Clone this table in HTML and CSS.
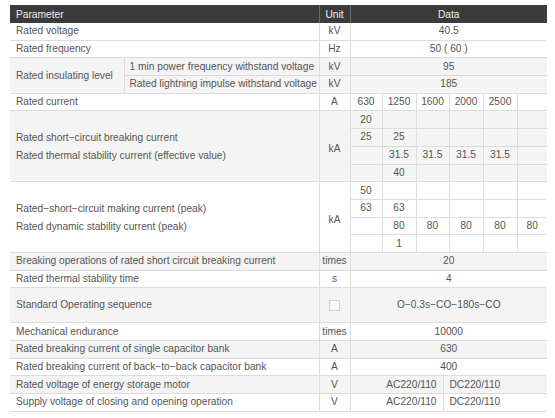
FILE: index.html
```html
<!DOCTYPE html>
<html>
<head>
<meta charset="utf-8">
<link rel="stylesheet" href="styles.css">
</head>
<body>
<table class="spec">
  <colgroup>
    <col class="c-p1"><col class="c-p2"><col class="c-u">
    <col class="c-d1"><col class="c-d2"><col class="c-d3"><col class="c-d4"><col class="c-d5"><col class="c-d6"><col class="c-d7">
  </colgroup>
  <thead>
    <tr class="head">
      <th class="p" colspan="2">Parameter</th>
      <th>Unit</th>
      <th colspan="7">Data</th>
    </tr>
  </thead>
  <tbody>
    <tr>
      <td class="p" colspan="2">Rated voltage</td><td class="u">kV</td><td class="c" colspan="7">40.5</td>
    </tr>
    <tr>
      <td class="p" colspan="2">Rated frequency</td><td class="u">Hz</td><td class="c" colspan="7">50 ( 60 )</td>
    </tr>
    <tr class="g">
      <td class="p" rowspan="2">Rated insulating level</td><td class="s">1 min power frequency withstand voltage</td><td class="u">kV</td><td class="c" colspan="7">95</td>
    </tr>
    <tr class="g">
      <td class="s">Rated lightning impulse withstand voltage</td><td class="u">kV</td><td class="c" colspan="7">185</td>
    </tr>
    <tr>
      <td class="p" colspan="2">Rated current</td><td class="u">A</td>
      <td class="c">630</td><td class="c">1250</td><td class="c" colspan="2">1600</td><td class="c">2000</td><td class="c">2500</td><td class="c"></td>
    </tr>
    <tr class="g">
      <td class="p two" colspan="2" rowspan="4">Rated short−circuit breaking current<br>Rated thermal stability current (effective value)</td>
      <td class="u k" rowspan="4">kA</td>
      <td class="c">20</td><td class="c"></td><td class="c" colspan="2"></td><td class="c"></td><td class="c"></td><td class="c"></td>
    </tr>
    <tr class="g">
      <td class="c">25</td><td class="c">25</td><td class="c" colspan="2"></td><td class="c"></td><td class="c"></td><td class="c"></td>
    </tr>
    <tr class="g">
      <td class="c"></td><td class="c">31.5</td><td class="c" colspan="2">31.5</td><td class="c">31.5</td><td class="c">31.5</td><td class="c"></td>
    </tr>
    <tr class="g">
      <td class="c"></td><td class="c">40</td><td class="c" colspan="2"></td><td class="c"></td><td class="c"></td><td class="c"></td>
    </tr>
    <tr>
      <td class="p two" colspan="2" rowspan="4">Rated−short−circuit making current (peak)<br>Rated dynamic stability current (peak)</td>
      <td class="u k" rowspan="4">kA</td>
      <td class="c">50</td><td class="c"></td><td class="c" colspan="2"></td><td class="c"></td><td class="c"></td><td class="c"></td>
    </tr>
    <tr>
      <td class="c">63</td><td class="c">63</td><td class="c" colspan="2"></td><td class="c"></td><td class="c"></td><td class="c"></td>
    </tr>
    <tr>
      <td class="c"></td><td class="c">80</td><td class="c" colspan="2">80</td><td class="c">80</td><td class="c">80</td><td class="c">80</td>
    </tr>
    <tr>
      <td class="c"></td><td class="c">1</td><td class="c" colspan="2"></td><td class="c"></td><td class="c"></td><td class="c"></td>
    </tr>
    <tr class="g">
      <td class="p" colspan="2">Breaking operations of rated short circuit breaking current</td><td class="u">times</td><td class="c" colspan="7">20</td>
    </tr>
    <tr>
      <td class="p" colspan="2">Rated thermal stability time</td><td class="u">s</td><td class="c" colspan="7">4</td>
    </tr>
    <tr class="g tall">
      <td class="p" colspan="2">Standard Operating sequence</td><td class="u"><span class="box"></span></td><td class="c" colspan="7">O−0.3s−CO−180s−CO</td>
    </tr>
    <tr>
      <td class="p" colspan="2">Mechanical endurance</td><td class="u">times</td><td class="c" colspan="7">10000</td>
    </tr>
    <tr class="g">
      <td class="p" colspan="2">Rated breaking current of single capacitor bank</td><td class="u">A</td><td class="c" colspan="7">630</td>
    </tr>
    <tr>
      <td class="p" colspan="2">Rated breaking current of back−to−back capacitor bank</td><td class="u">A</td><td class="c" colspan="7">400</td>
    </tr>
    <tr class="g">
      <td class="p" colspan="2">Rated voltage of energy storage motor</td><td class="u">V</td><td class="r" colspan="3">AC220/110</td><td class="l" colspan="4">DC220/110</td>
    </tr>
    <tr>
      <td class="p" colspan="2">Supply voltage of closing and opening operation</td><td class="u">V</td><td class="r" colspan="3">AC220/110</td><td class="l" colspan="4">DC220/110</td>
    </tr>
  </tbody>
</table>
</body>
</html>
```

FILE: styles.css
```css
html, body {
  margin: 0;
  padding: 0;
  background: #ffffff;
}

.spec {
  margin: 5px 0 0 10px;
  width: 537px;
  table-layout: fixed;
  border-collapse: collapse;
  font-family: "Liberation Sans", Arial, sans-serif;
  font-size: 10.2px;
  color: #555555;
}

.c-p1 { width: 114px; }
.c-p2 { width: 195px; }
.c-u  { width: 31px; }
.c-d1 { width: 32px; }
.c-d2 { width: 34px; }
.c-d3 { width: 27px; }
.c-d4 { width: 6px; }
.c-d5 { width: 34px; }
.c-d6 { width: 34px; }
.c-d7 { width: 30px; }

.head th {
  background: #3b3b3b;
  color: #ececec;
  font-weight: normal;
  height: 18px;
  padding: 0;
  text-align: center;
  border-left: 1px solid #6a6a6a;
  white-space: nowrap;
}

.head th.p {
  text-align: left;
  padding-left: 6px;
  border-left: 0;
}

.spec td {
  height: 16.7px;
  padding: 0;
  border-bottom: 1px solid #dcdcdc;
  border-left: 1px solid #dcdcdc;
  white-space: nowrap;
  overflow: hidden;
  line-height: 16px;
}

.spec tr.g td {
  background: #f4f4f4;
}

.spec td.p {
  text-align: left;
  padding-left: 6px;
  border-left: 0;
}

.spec td.s {
  text-align: left;
  padding-left: 5px;
}

.spec td.u,
.spec td.c {
  text-align: center;
}

.spec td.r {
  text-align: right;
  padding-right: 6px;
}

.spec td.l {
  text-align: left;
  padding-left: 6px;
}

.spec td.two {
  line-height: 18px;
  padding-top: 2px;
}

.spec td.k {
  padding-top: 6px;
}

.spec tr.tall td {
  height: 34px;
}

.box {
  display: inline-block;
  width: 9px;
  height: 9px;
  border: 1px solid #cfcfcf;
  background: #fafafa;
  vertical-align: middle;
}
```
